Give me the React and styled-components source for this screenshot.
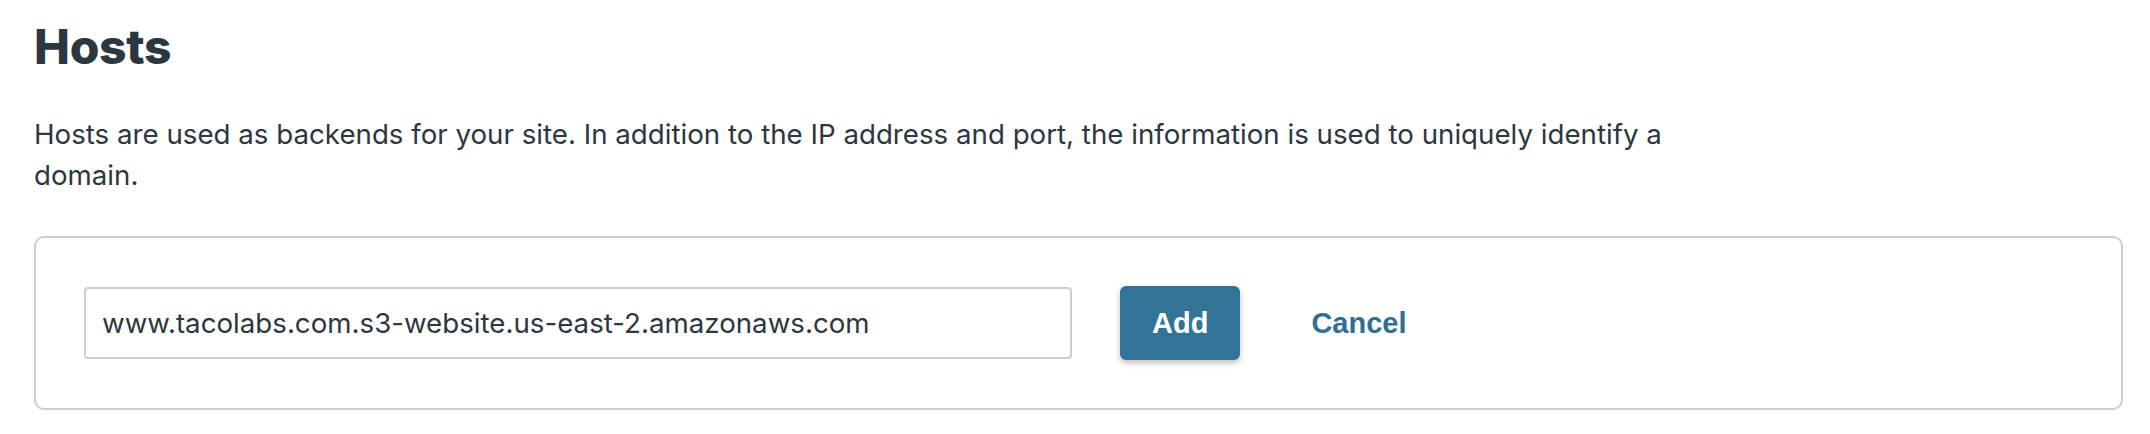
import React from 'react'
import styled, { createGlobalStyle } from 'styled-components'

const GlobalStyle = createGlobalStyle`
  html, body {
    margin: 0;
    padding: 0;
    background: #ffffff;
  }
  body {
    font-family: Inter, "Noto Sans", sans-serif;
    color: #2d3741;
  }
`;

const Page = styled.div`
  padding: 19px 27px 0 34px;
`;

const Title = styled.h1`
  margin: 0;
  font-size: 48px;
  font-weight: 800;
  line-height: 56px;
  color: #2d3741;
  letter-spacing: -0.3px;
`;

const Description = styled.p`
  margin: 39px 0 0;
  max-width: 1710px;
  font-size: 27.7px;
  line-height: 41px;
  color: #2d3741;
`;

const Panel = styled.div`
  margin-top: 40px;
  border: 2px solid #c9ced4;
  border-radius: 10px;
  padding: 48px 48px;
  display: flex;
  align-items: center;
`;

const HostInput = styled.input`
  box-sizing: border-box;
  width: 988px;
  height: 72px;
  padding: 0 16px;
  border: 2px solid #c9ced4;
  border-radius: 4px;
  font-family: Inter, "Noto Sans", sans-serif;
  font-size: 27.7px;
  color: #2d3741;
  outline: none;
`;

const Button = styled.button`
  margin-left: ${(props) => (props.variant === 'link' ? '47px' : '48px')};
  height: 74px;
  padding: 0 ${(props) => (props.variant === 'link' ? '24px' : '32px')};
  border: none;
  border-radius: 6px;
  background: ${(props) => (props.variant === 'link' ? 'transparent' : '#327398')};
  color: ${(props) => (props.variant === 'link' ? '#2f6f95' : '#ffffff')};
  box-shadow: ${(props) =>
    props.variant === 'link' ? 'none' : '0 3px 6px rgba(0, 0, 0, 0.25)'};
  font-family: "Liberation Sans", Arial, sans-serif;
  font-size: 29px;
  font-weight: 700;
  cursor: pointer;
`;

const App = () => {
  return (
    <Page>
      <GlobalStyle />
      <Title>Hosts</Title>
      <Description>
        Hosts are used as backends for your site. In addition to the IP address and port, the
        information is used to uniquely identify a domain.
      </Description>
      <Panel>
        <HostInput defaultValue="www.tacolabs.com.s3-website.us-east-2.amazonaws.com" />
        <Button>Add</Button>
        <Button variant="link">Cancel</Button>
      </Panel>
    </Page>
  )
}

export default App
